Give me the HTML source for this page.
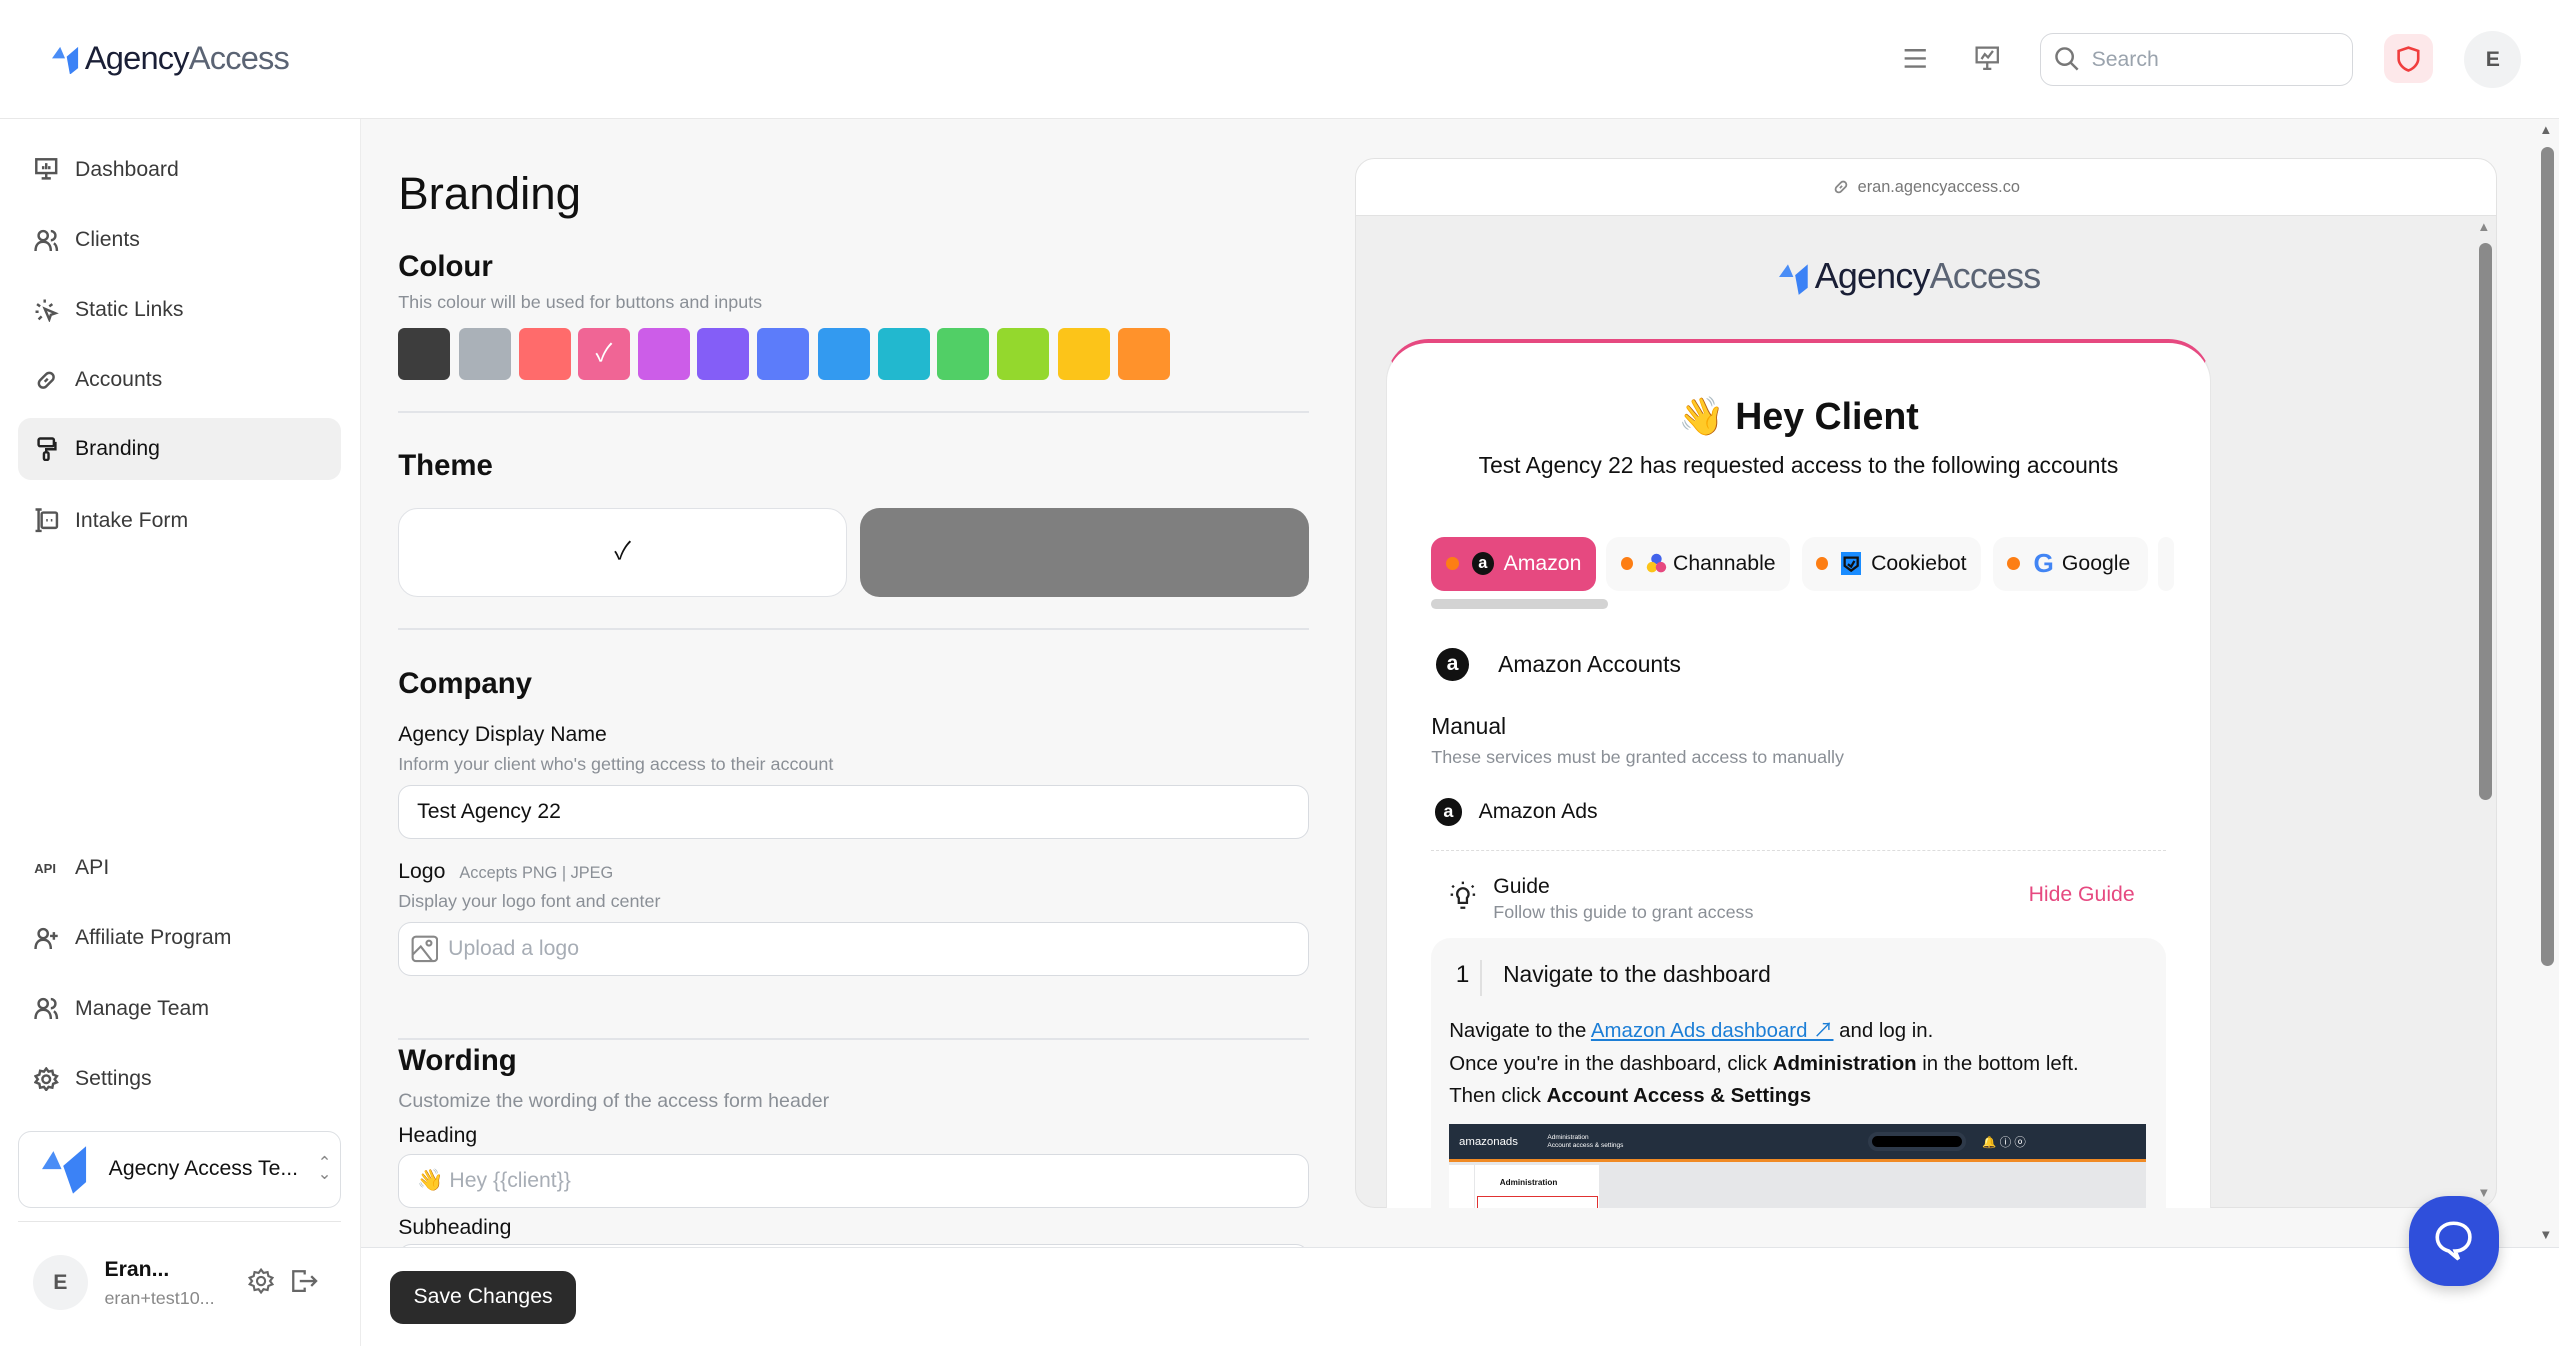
<!DOCTYPE html>
<html><head><meta charset="utf-8"><style>
*{box-sizing:border-box;margin:0;padding:0}
html,body{width:2559px;height:1347px;overflow:hidden;background:#fff}
#r{zoom:1.632;width:1568px;height:825px;position:relative;font-family:"Liberation Sans","Noto Sans CJK JP",sans-serif;color:#111;overflow:hidden}
.a{position:absolute}
.hdr{left:0;top:0;width:1568px;height:73px;background:#fff;border-bottom:1px solid #e8e8e8}
.side{left:0;top:73px;width:221px;height:752px;background:#fff;border-right:1px solid #ececec}
.main{left:221px;top:73px;width:1335px;height:752px;background:#f7f7f7}
.nav{left:11px;width:198px;height:38px;border-radius:8px;display:flex;align-items:center;padding-left:10px;font-size:13px;color:#3a3a3a}
.nav svg{width:15px;height:15px;margin-right:10px;stroke:#555;fill:none;stroke-width:1.6}
.sw{top:201px;width:32px;height:32px;border-radius:4px}
.h2{font-size:18px;font-weight:bold}
.desc{font-size:11px;color:#8a8f96}
.lbl{font-size:13px;color:#111}
.inp{left:244px;width:558px;height:33px;background:#fff;border:1px solid #d8dbe0;border-radius:8px;font-size:13px;display:flex;align-items:center;padding-left:11px}
.hr{left:244px;width:558px;height:1px;background:#e2e4e8}
.tab{top:329px;height:33px;border-radius:8px;background:#f8f8f8;display:flex;align-items:center;padding:0 9px;font-size:13px;color:#111}
.dot{width:8px;height:8px;border-radius:50%;background:#fd7e14;margin-right:8px}
.amz{width:14px;height:14px;border-radius:50%;background:#111;color:#fff;font-size:10px;font-weight:bold;display:inline-flex;align-items:center;justify-content:center;margin-right:6px}
#clip{left:831px;top:132px;width:687px;height:608px;overflow:hidden}
#clip>.a{margin-left:-831px;margin-top:-132px}
</style></head><body><div id="r">
<div class="a hdr"></div>
<div class="a" style="left:32px;top:24px;display:flex;align-items:center">
<svg width="20" height="20" viewBox="0 0 20 20"><path d="M0 10 L5 3 L8 10Z" fill="#4a8df6"/><path d="M9 9 L16 3 L16 16 L11 20Z" fill="#3b82f6"/></svg>
<span style="font-size:20px;color:#1a1f36;letter-spacing:-0.5px">Agency</span><span style="font-size:20px;color:#5b6474;letter-spacing:-0.5px">Access</span></div>
<svg class="a" style="left:1166px;top:29px" width="15" height="14" viewBox="0 0 15 14" stroke="#777" stroke-width="1.5"><path d="M1 2H14M1 7H14M1 12H14"/></svg>
<svg class="a" style="left:1210px;top:28px" width="15" height="16" viewBox="0 0 15 16" fill="none" stroke="#777" stroke-width="1.4"><rect x="1" y="1" width="13" height="9"/><path d="M4 8L6 5L8 7L11 3M7.5 10V14M5 14H10"/></svg>
<div class="a" style="left:1250px;top:20px;width:192px;height:33px;border:1px solid #d6d8dc;border-radius:8px;background:#fff;display:flex;align-items:center;padding-left:8px;font-size:13px;color:#9aa3ad">
<svg width="16" height="16" viewBox="0 0 16 16" fill="none" stroke="#777" stroke-width="1.5" style="margin-right:7px"><circle cx="6.5" cy="6.5" r="5"/><path d="M10 10L14.5 14.5"/></svg>Search</div>
<div class="a" style="left:1461px;top:21px;width:30px;height:30px;border-radius:8px;background:#fde8ea;display:flex;align-items:center;justify-content:center">
<svg width="14" height="16" viewBox="0 0 14 16" fill="none" stroke="#f03e3e" stroke-width="1.6"><path d="M7 1L13 3V8C13 11 10 14 7 15C4 14 1 11 1 8V3Z"/></svg></div>
<div class="a" style="left:1510px;top:19px;width:35px;height:35px;border-radius:50%;background:#f1f2f3;display:flex;align-items:center;justify-content:center;font-size:13px;font-weight:bold;color:#555">E</div>

<div class="a side"></div>
<div class="a nav" style="top:85px"><svg viewBox="0 0 16 16"><rect x="1.5" y="1.5" width="13" height="9"/><path d="M8 10.5V14M5 14H11M6 8V6M8 8V4M10 8V6"/></svg>Dashboard</div>
<div class="a nav" style="top:128px"><svg viewBox="0 0 16 16"><circle cx="6" cy="5" r="3"/><path d="M1 15C1 11 3 9 6 9S11 11 11 15M11 2A3 3 0 0 1 11 8M13 10C14.5 11 15 13 15 15"/></svg>Clients</div>
<div class="a nav" style="top:171px"><svg viewBox="0 0 16 16"><path d="M7 1V3M2 4L4 5.5M1 9H3M12 4L10 5.5M3 14L5 12M7 7L14 10L11 11L10 14Z"/></svg>Static Links</div>
<div class="a nav" style="top:214px"><svg viewBox="0 0 16 16"><path d="M7 9L9 7M6 6L4 8A2.5 2.5 0 0 0 8 12L10 10M6 6L8 4A2.5 2.5 0 0 1 12 8L10 10"/></svg>Accounts</div>
<div class="a nav" style="top:256px;background:#f0f0f0;color:#111"><svg viewBox="0 0 16 16" style="stroke:#222"><rect x="3" y="1" width="10" height="5" rx="1"/><path d="M13 4H14V8H8V10"/><rect x="6.5" y="10" width="3" height="5" rx="1"/></svg>Branding</div>
<div class="a nav" style="top:300px"><svg viewBox="0 0 16 16"><rect x="5" y="3" width="10" height="10" rx="1"/><path d="M3 1V15M1 1H5M1 15H5M8 8H9M11 8H12"/></svg>Intake Form</div>
<div class="a nav" style="top:513px"><span style="font-size:8px;font-weight:bold;color:#444;width:15px;margin-right:10px">API</span>API</div>
<div class="a nav" style="top:556px"><svg viewBox="0 0 16 16"><circle cx="6" cy="5" r="3"/><path d="M1 15C1 11 3 9 6 9S11 11 11 15M13 4V9M10.5 6.5H15.5"/></svg>Affiliate Program</div>
<div class="a nav" style="top:599px"><svg viewBox="0 0 16 16"><circle cx="6" cy="5" r="3"/><path d="M1 15C1 11 3 9 6 9S11 11 11 15M11 2A3 3 0 0 1 11 8M13 10C14.5 11 15 13 15 15"/></svg>Manage Team</div>
<div class="a nav" style="top:642px"><svg viewBox="0 0 16 16"><circle cx="8" cy="8" r="2.5"/><path d="M8 1L9.5 3L12 2.5L12.5 5L15 6L13.5 8L15 10L12.5 11L12 13.5L9.5 13L8 15L6.5 13L4 13.5L3.5 11L1 10L2.5 8L1 6L3.5 5L4 2.5L6.5 3Z"/></svg>Settings</div>
<div class="a" style="left:11px;top:693px;width:198px;height:47px;border:1px solid #dcdfe3;border-radius:8px;background:#fff;display:flex;align-items:center;padding-left:14px;font-size:13px">
<svg width="28" height="32" viewBox="0 0 28 32" style="margin-right:13px"><path d="M0 16L7 5L12 16Z" fill="#4a8df6"/><path d="M13 14L27 2V24L19 31Z" fill="#3b82f6"/></svg>Agecny Access Te...<span style="margin-left:12px;color:#888;font-size:10px;line-height:7px">⌃<br>⌄</span></div>
<div class="a" style="left:11px;top:748px;width:198px;height:1px;background:#e6e6e6"></div>
<div class="a" style="left:20px;top:769px;width:34px;height:34px;border-radius:50%;background:#f1f2f3;display:flex;align-items:center;justify-content:center;font-size:13px;font-weight:bold;color:#555">E</div>
<div class="a" style="left:64px;top:771px;font-size:13px;font-weight:bold">Eran...</div>
<div class="a" style="left:64px;top:789px;font-size:11px;color:#888">eran+test10...</div>
<svg class="a" style="left:152px;top:777px" width="16" height="16" viewBox="0 0 16 16" fill="none" stroke="#666" stroke-width="1.3"><circle cx="8" cy="8" r="2.5"/><path d="M8 1L9.5 3L12 2.5L12.5 5L15 6L13.5 8L15 10L12.5 11L12 13.5L9.5 13L8 15L6.5 13L4 13.5L3.5 11L1 10L2.5 8L1 6L3.5 5L4 2.5L6.5 3Z"/></svg>
<svg class="a" style="left:178px;top:777px" width="17" height="16" viewBox="0 0 17 16" fill="none" stroke="#666" stroke-width="1.4"><path d="M9 4V2H2V14H9V12M6 8H16M13 5L16 8L13 11"/></svg>

<div class="a main"></div>
<div class="a" style="left:244px;top:103px;font-size:28px">Branding</div>
<div class="a h2" style="left:244px;top:153px">Colour</div>
<div class="a desc" style="left:244px;top:179px">This colour will be used for buttons and inputs</div>
<div class="a sw" style="left:244px;background:#3d3d3d"></div>
<div class="a sw" style="left:281px;background:#aab1b8"></div>
<div class="a sw" style="left:318px;background:#ff6b6b"></div>
<div class="a sw" style="left:354px;background:#f06595;color:#fff;font-size:15px;text-align:center;line-height:32px">✓</div>
<div class="a sw" style="left:391px;background:#cc5de8"></div>
<div class="a sw" style="left:427px;background:#845ef7"></div>
<div class="a sw" style="left:464px;background:#5c7cfa"></div>
<div class="a sw" style="left:501px;background:#339af0"></div>
<div class="a sw" style="left:538px;background:#22b8cf"></div>
<div class="a sw" style="left:574px;background:#51cf66"></div>
<div class="a sw" style="left:611px;background:#94d82d"></div>
<div class="a sw" style="left:648px;background:#fcc419"></div>
<div class="a sw" style="left:685px;background:#ff922b"></div>
<div class="a hr" style="top:252px"></div>
<div class="a h2" style="left:244px;top:275px">Theme</div>
<div class="a" style="left:244px;top:311px;width:275px;height:55px;background:#fff;border:1px solid #e0e2e6;border-radius:12px;text-align:center;line-height:53px;font-size:15px">✓</div>
<div class="a" style="left:527px;top:311px;width:275px;height:55px;background:#7f7f7f;border-radius:12px"></div>
<div class="a hr" style="top:385px"></div>
<div class="a h2" style="left:244px;top:409px">Company</div>
<div class="a lbl" style="left:244px;top:443px">Agency Display Name</div>
<div class="a desc" style="left:244px;top:462px">Inform your client who's getting access to their account</div>
<div class="a inp" style="top:481px">Test Agency 22</div>
<div class="a lbl" style="left:244px;top:527px">Logo <span style="font-size:10px;color:#8a8f96;margin-left:5px">Accepts PNG | JPEG</span></div>
<div class="a desc" style="left:244px;top:546px">Display your logo font and center</div>
<div class="a inp" style="top:565px;color:#a7adb5;padding-left:7px"><svg width="17" height="17" viewBox="0 0 17 17" fill="none" stroke="#888" stroke-width="1.3" style="margin-right:6px"><rect x="1" y="1" width="15" height="15" rx="2"/><circle cx="11" cy="5" r="1.5"/><path d="M1 12L6 7L13 16"/></svg>Upload a logo</div>
<div class="a hr" style="top:636px"></div>
<div class="a h2" style="left:244px;top:640px">Wording</div>
<div class="a" style="left:244px;top:668px;font-size:12px;color:#8a8f96">Customize the wording of the access form header</div>
<div class="a lbl" style="left:244px;top:689px">Heading</div>
<div class="a inp" style="top:707px;color:#a7adb5">👋 Hey {{client}}</div>
<div class="a lbl" style="left:244px;top:745px">Subheading</div>
<div class="a inp" style="top:762px"></div>
<div class="a" style="left:221px;top:764px;width:1347px;height:61px;background:#fff;border-top:1px solid #e3e5e8"></div>
<div class="a" style="left:239px;top:779px;width:114px;height:32px;background:#2b2b2b;border-radius:8px;color:#fff;font-size:13px;display:flex;align-items:center;justify-content:center">Save Changes</div>

<div class="a" style="left:830px;top:97px;width:700px;height:643px;background:#efefef;border:1px solid #e2e2e2;border-radius:12px;overflow:hidden">
<div style="height:35px;background:#fff;border-bottom:1px solid #e2e2e2;display:flex;align-items:center;justify-content:center;font-size:10px;color:#777">
<svg width="11" height="11" viewBox="0 0 16 16" fill="none" stroke="#888" stroke-width="1.6" style="margin-right:5px"><path d="M7 9L9 7M6 6L4 8A2.5 2.5 0 0 0 8 12L10 10M6 6L8 4A2.5 2.5 0 0 1 12 8L10 10"/></svg>eran.agencyaccess.co</div>
</div>
<div class="a" style="left:1519px;top:149px;width:8px;height:341px;background:#8a8a8a;border-radius:4px"></div>
<div class="a" style="left:1518px;top:134px;font-size:8px;color:#888">▲</div>
<div class="a" style="left:1518px;top:726px;font-size:8px;color:#888">▼</div>
<div class="a" style="left:1090px;top:157px;display:flex;align-items:center">
<svg width="22" height="22" viewBox="0 0 20 20"><path d="M0 10 L5 3 L8 10Z" fill="#4a8df6"/><path d="M9 9 L16 3 L16 16 L11 20Z" fill="#3b82f6"/></svg>
<span style="font-size:22px;color:#1a1f36;letter-spacing:-0.5px">Agency</span><span style="font-size:22px;color:#5b6474;letter-spacing:-0.5px">Access</span></div>
<div class="a" id="clip">
<div class="a" style="left:849px;top:208px;width:506px;height:540px;background:#fff;border-top:3px solid #e64980;border-left:1px solid #e6e6e6;border-right:1px solid #e6e6e6;border-radius:26px 26px 0 0"></div>
</div>
<div class="a" style="left:849px;top:242px;width:506px;text-align:center;font-size:23px;font-weight:bold">👋 Hey Client</div>
<div class="a" style="left:849px;top:277px;width:506px;text-align:center;font-size:14px">Test Agency 22 has requested access to the following accounts</div>
<div class="a tab" style="left:877px;width:101px;background:#e64980;color:#fff"><span class="dot"></span><span class="amz">a</span>Amazon</div>
<div class="a tab" style="left:984px;width:113px"><span class="dot"></span><svg width="14" height="14" viewBox="0 0 14 14" style="margin-right:4px"><circle cx="7" cy="4" r="3.5" fill="#4263eb"/><circle cx="4" cy="9.5" r="3.5" fill="#fcc419"/><circle cx="10" cy="9.5" r="3.5" fill="#e64980"/></svg>Channable</div>
<div class="a tab" style="left:1104px;width:110px"><span class="dot"></span><span style="width:14px;height:14px;background:#1a8cff;margin-right:6px;display:inline-flex;align-items:center;justify-content:center"><svg width="10" height="10" viewBox="0 0 10 10" fill="none" stroke="#111" stroke-width="1.4"><path d="M1 1H9V6L5 9L1 6Z M3 5L5 6.5L7 3"/></svg></span>Cookiebot</div>
<div class="a tab" style="left:1221px;width:95px"><span class="dot"></span><span style="font-weight:bold;font-size:16px;color:#4285f4;margin-right:5px">G</span>Google</div>
<div class="a tab" style="left:1322px;width:10px;padding:0"></div>
<div class="a" style="left:877px;top:367px;width:108px;height:6px;background:#d3d3d3;border-radius:3px"></div>
<div class="a" style="left:880px;top:397px;display:flex;align-items:center;font-size:14px"><span class="amz" style="width:20px;height:20px;font-size:13px;margin-right:18px">a</span>Amazon Accounts</div>
<div class="a" style="left:877px;top:437px;font-size:14px">Manual</div>
<div class="a desc" style="left:877px;top:458px">These services must be granted access to manually</div>
<div class="a" style="left:879px;top:489px;display:flex;align-items:center;font-size:13px"><span class="amz" style="width:17px;height:17px;font-size:11px;margin-right:10px">a</span>Amazon Ads</div>
<div class="a" style="left:877px;top:521px;width:450px;border-top:1px dashed #ddd"></div>
<svg class="a" style="left:888px;top:539px" width="17" height="19" viewBox="0 0 17 19" fill="none" stroke="#222" stroke-width="1.4"><path d="M8.5 1V2.5M2 3.5L3 4.5M15 3.5L14 4.5M1 9H2.5M14.5 9H16M6 14V11A3.5 3.5 0 1 1 11 11V14ZM7 17H10"/></svg>
<div class="a" style="left:915px;top:536px;font-size:13px">Guide</div>
<div class="a desc" style="left:915px;top:553px">Follow this guide to grant access</div>
<div class="a" style="left:1243px;top:541px;font-size:13px;color:#e64980">Hide Guide</div>
<div class="a" style="left:877px;top:575px;width:450px;height:165px;background:#f7f7f7;border-radius:12px 12px 0 0"></div>
<div class="a" style="left:892px;top:589px;font-size:15px">1</div>
<div class="a" style="left:907px;top:588px;width:1px;height:22px;background:#e0e0e0"></div>
<div class="a" style="left:921px;top:589px;font-size:14px">Navigate to the dashboard</div>
<div class="a" style="left:888px;top:622px;font-size:12.5px;line-height:20px;width:430px">Navigate to the <span style="color:#1c7ed6;text-decoration:underline">Amazon Ads dashboard ↗</span> and log in.<br>Once you're in the dashboard, click <b>Administration</b> in the bottom left.<br>Then click <b>Account Access &amp; Settings</b></div>
<div class="a" style="left:888px;top:689px;width:427px;height:51px;background:#e6e7e9;overflow:hidden">
<div style="height:23px;background:#232f3e;border-bottom:2px solid #f08a24;display:flex;align-items:center;padding-left:6px;color:#fff;font-size:7px">amazonads<span style="margin-left:18px;font-size:4px;line-height:5px">Administration<br>Account access &amp; settings</span>
<span style="margin-left:150px;width:60px;height:12px;background:#000;border:3px solid #2e3a4a;border-radius:6px"></span><span style="margin-left:10px;font-size:7px">🔔 ⓘ ⓞ</span></div>
<div style="position:absolute;left:0;top:25px;width:15px;height:30px;background:#fff"></div>
<div style="position:absolute;left:16px;top:25px;width:76px;height:30px;background:#fff;font-size:5px;font-weight:bold;padding:8px 15px">Administration</div>
<div style="position:absolute;left:17px;top:44px;width:74px;height:10px;border:1px solid #e03131"></div>
</div>
<div class="a" style="left:1476px;top:733px;width:55px;height:55px;border-radius:24px;background:#2f4fdb;box-shadow:0 3px 8px rgba(0,0,0,.2);display:flex;align-items:center;justify-content:center">
<svg width="24" height="26" viewBox="0 0 24 26" fill="none" stroke="#fff" stroke-width="2.2"><path d="M12 2C18 2 22 5.5 22 10.5S18 19 13 19L15 24L9 19C5 18 2 15 2 10.5S6 2 12 2Z"/></svg></div>
<div class="a" style="left:1556px;top:73px;width:12px;height:691px;background:#f7f7f7"></div>
<div class="a" style="left:1557px;top:90px;width:8px;height:502px;background:#8a8a8a;border-radius:4px"></div>
<div class="a" style="left:1556px;top:75px;font-size:8px;color:#666">▲</div>
<div class="a" style="left:1556px;top:752px;font-size:8px;color:#666">▼</div>
</div></body></html>
